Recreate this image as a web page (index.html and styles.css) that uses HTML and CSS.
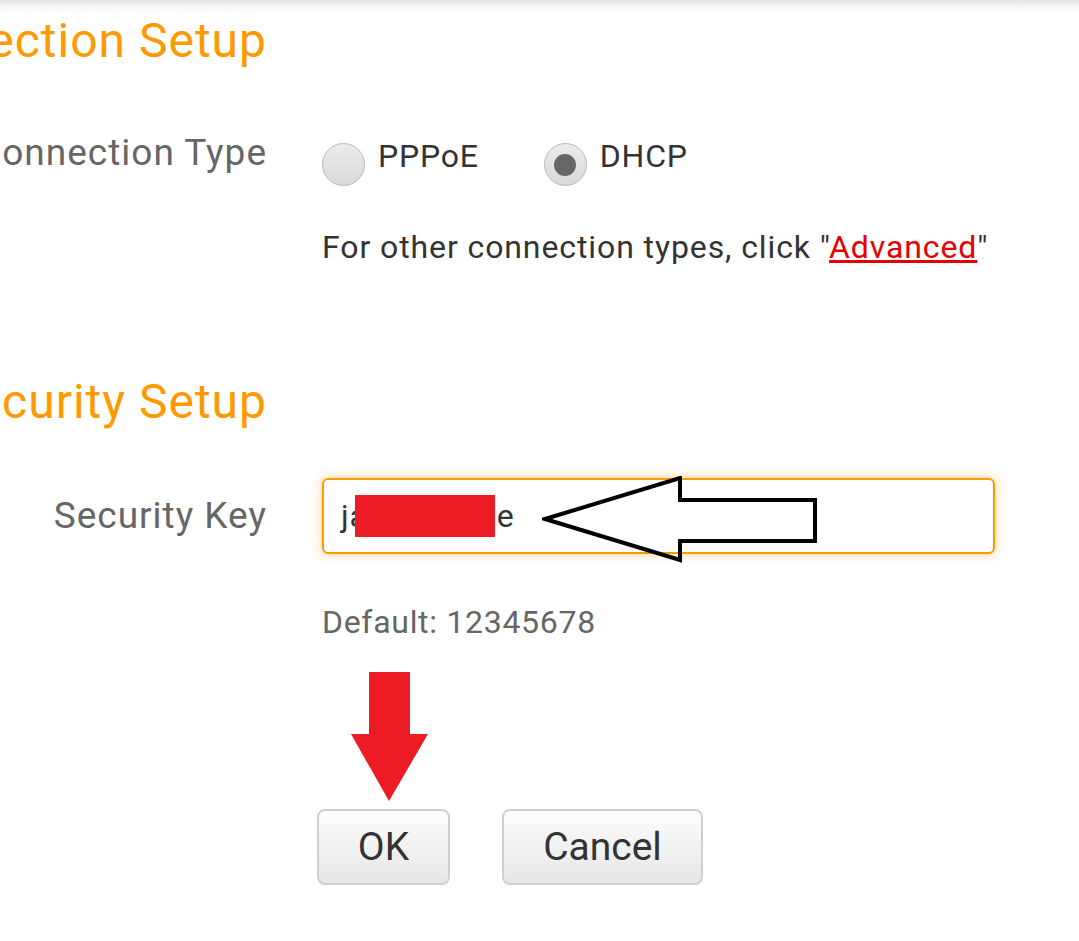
FILE: index.html
```html
<!DOCTYPE html>
<html>
<head>
<meta charset="utf-8">
<link rel="stylesheet" href="styles.css">
</head>
<body>
<div class="topbar"></div>
<main class="page">
  <div class="row heading-row">
    <div class="label-col"><h2 class="heading">Connection Setup</h2></div>
    <div></div>
  </div>
  <div class="row conn-row">
    <div class="label-col"><span class="label">Connection Type</span></div>
    <div class="radios">
      <label class="radio"><span class="dot"></span><span class="rtext">PPPoE</span></label>
      <label class="radio checked"><span class="dot"></span><span class="rtext">DHCP</span></label>
    </div>
  </div>
  <div class="row note-row">
    <div></div>
    <p class="note">For other connection types, click "<a href="#" class="adv">Advanced</a>"</p>
  </div>
  <div class="row heading-row second">
    <div class="label-col"><h2 class="heading">Security Setup</h2></div>
    <div></div>
  </div>
  <div class="row key-row">
    <div class="label-col"><span class="label key-label">Security Key</span></div>
    <div class="input-wrap">
      <div class="input">ja<span class="redact"></span>e</div>
      <svg class="outline-arrow" width="280" height="90" viewBox="0 0 280 90">
        <polygon points="3,43 138,2 138,24 273,24 273,65 138,65 138,84" fill="none" stroke="#000" stroke-width="4" stroke-linejoin="miter"/>
      </svg>
    </div>
  </div>
  <div class="row default-row">
    <div></div>
    <p class="default">Default: 12345678</p>
  </div>
  <div class="row btn-row">
    <div></div>
    <div class="buttons">
      <svg class="red-arrow" width="80" height="132" viewBox="0 0 80 132">
        <polygon points="19,0 60,0 60,62 78,62 39,129 1,62 19,62" fill="#ed1c24"/>
      </svg>
      <button class="btn ok">OK</button>
      <button class="btn cancel">Cancel</button>
    </div>
  </div>
</main>
</body>
</html>
```

FILE: styles.css
```css
html, body {
  margin: 0;
  padding: 0;
  background: #fff;
  font-family: Roboto, "Liberation Sans", sans-serif;
  overflow: hidden;
}
.topbar {
  height: 13px;
  background: linear-gradient(#e0e0e0 0px, #f2f2f2 5px, #fafafa 10px, #fff 13px);
}
.page {
  width: 1079px;
}
.row {
  display: grid;
  grid-template-columns: 267px 1fr;
  column-gap: 55px;
}
.label-col {
  display: flex;
  justify-content: flex-end;
  white-space: nowrap;
}
.heading {
  margin: 0;
  font-weight: 400;
  font-size: 48px;
  letter-spacing: 1px;
  line-height: 56px;
  color: #ff9900;
}
.label {
  font-size: 37px;
  letter-spacing: 1px;
  color: #666;
  line-height: 44px;
}
.conn-row { margin-top: 62px; }
.radios {
  display: flex;
  gap: 65px;
}
.radio {
  display: flex;
  align-items: flex-start;
  gap: 13px;
}
.dot {
  width: 43px;
  height: 43px;
  border-radius: 50%;
  border: 1px solid #b8b8b8;
  background: linear-gradient(#ececec, #d9d9d9);
  box-sizing: border-box;
  position: relative;
  margin-top: 12px;
}
.checked .dot::after {
  content: "";
  position: absolute;
  left: 9.5px;
  top: 9.5px;
  width: 22px;
  height: 22px;
  border-radius: 50%;
  background: #666;
}
.rtext {
  font-size: 32px;
  letter-spacing: 0.8px;
  line-height: 50px;
  color: #333;
}
.note {
  margin: 39px 0 0;
  font-size: 32px;
  letter-spacing: 0.9px;
  line-height: 44px;
  color: #333;
  white-space: nowrap;
}
.adv { color: #e60000; }
.second { margin-top: 105px; }
.key-row { margin-top: 48px; }
.key-label { margin-top: 16px; }
.input-wrap { position: relative; }
.input {
  width: 673px;
  height: 76px;
  box-sizing: border-box;
  border: 2px solid #ff9900;
  border-radius: 6px;
  box-shadow: 0 0 12px rgba(255, 153, 0, 0.45);
  font-size: 32px;
  letter-spacing: 0.8px;
  color: #333;
  padding-left: 17px;
  display: flex;
  align-items: center;
}
.redact {
  display: inline-block;
  width: 140px;
  height: 42px;
  margin-left: -13px;
  margin-right: 2px;
  background: #ed1c24;
}
.outline-arrow {
  position: absolute;
  left: 220px;
  top: -2px;
}
.default {
  margin: 46px 0 0;
  font-size: 32px;
  letter-spacing: 0.7px;
  line-height: 44px;
  color: #666;
}
.buttons {
  position: relative;
  display: flex;
  gap: 52px;
  margin-top: 165px;
  margin-left: -5px;
}
.red-arrow {
  position: absolute;
  left: 33px;
  top: -137px;
}
.btn {
  font-family: Roboto, "Liberation Sans", sans-serif;
  font-size: 39px;
  color: #333;
  height: 76px;
  padding: 0;
  border: 2px solid #cfcfcf;
  border-radius: 8px;
  background: linear-gradient(#fdfdfd, #e6e6e6);
}
.ok { width: 133px; }
.cancel { width: 201px; }
```
